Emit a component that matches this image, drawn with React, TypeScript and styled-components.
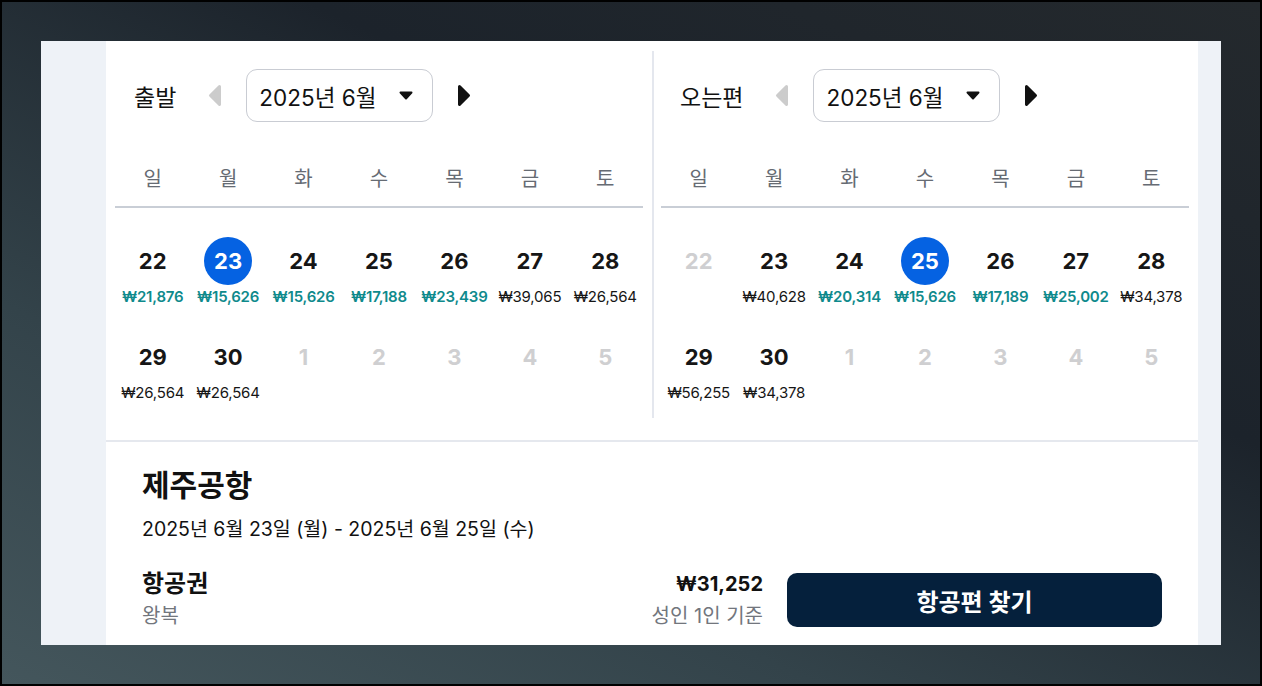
import React from "react";
import styled, { createGlobalStyle } from "styled-components";

const GlobalStyle = createGlobalStyle`
  html, body { margin: 0; padding: 0; }
  body {
    font-family: "Inter", "Noto Sans CJK KR", "Noto Sans", sans-serif;
    color: #111;
  }
  * { box-sizing: border-box; }
`;

const Page = styled.div`
  width: 1262px;
  height: 686px;
  border: 2px solid #000;
  padding: 39px;
  background: linear-gradient(205deg, #24292d 0%, #1c232b 35%, #33434a 70%, #44565c 100%);
  overflow: hidden;
`;

const Panel = styled.div`
  height: 604px;
  background: #eef2f7;
  padding: 0 23px 0 65px;
  overflow: hidden;
`;

const Card = styled.div`
  background: #fff;
  min-height: 100%;
`;

const CalendarSection = styled.div`
  display: flex;
  padding: 10px 9px 22px;
  border-bottom: 2px solid #e5e8ee;
`;

const Divider = styled.div`
  width: 2px;
  background: #e4e7ee;
  margin: 0 7px 0 9px;
`;

const Month = styled.div`
  width: 528px;
  padding: 18px 0 15px;
`;

const Header = styled.div`
  display: flex;
  align-items: center;
  height: 53px;
  padding-left: 19px;
`;

const Label = styled.span`
  font-size: 23px;
  color: #111;
  margin-right: 32px;
`;

const ArrowBtn = styled.span`
  display: inline-flex;
  width: 14px;
  height: 23px;
`;

const Dropdown = styled.div`
  width: 187px;
  height: 53px;
  border: 1px solid #c9ccd3;
  border-radius: 11px;
  display: flex;
  align-items: center;
  justify-content: space-between;
  padding: 0 19px 0 12px;
  margin: 0 24px;
  font-size: 22.5px;
  color: #111;
`;

const WeekRow = styled.div`
  display: grid;
  grid-template-columns: repeat(7, 1fr);
  margin-top: 30px;
  height: 56px;
  border-bottom: 2px solid #c9ced6;
`;

const WeekDay = styled.div`
  text-align: center;
  font-size: 20px;
  line-height: 54px;
  color: #666b73;
`;

const DayGrid = styled.div`
  display: grid;
  grid-template-columns: repeat(7, 1fr);
  row-gap: 26px;
  padding-top: 29px;
`;

const DayCell = styled.div`
  display: flex;
  flex-direction: column;
  align-items: center;
  height: 70px;
`;

const DayNum = styled.div<{ $selected?: boolean; $disabled?: boolean }>`
  width: 48px;
  height: 48px;
  border-radius: 50%;
  display: flex;
  align-items: center;
  justify-content: center;
  font-size: 22px;
  font-weight: 700;
  background: ${(p) => (p.$selected ? "#0562e2" : "transparent")};
  color: ${(p) => (p.$selected ? "#fff" : p.$disabled ? "#cfcfd1" : "#161616")};
`;

const Price = styled.div<{ $cheap?: boolean }>`
  margin-top: 2px;
  font-size: 15px;
  line-height: 20px;
  white-space: nowrap;
  font-weight: ${(p) => (p.$cheap ? 600 : 400)};
  color: ${(p) => (p.$cheap ? "#0f8a8c" : "#161616")};
  letter-spacing: -0.2px;
`;

const Summary = styled.div`
  padding: 23px 36px 0;
`;

const Title = styled.div`
  font-size: 30px;
  font-weight: 700;
  line-height: 40px;
  color: #111;
`;

const DateRange = styled.div`
  margin-top: 10px;
  font-size: 19.5px;
  line-height: 28px;
  color: #111;
`;

const BookRow = styled.div`
  margin-top: 30px;
  display: flex;
  align-items: center;
  height: 54px;
`;

const Info = styled.div<{ $right?: boolean }>`
  flex: ${(p) => (p.$right ? "none" : 1)};
  display: flex;
  flex-direction: column;
  align-items: ${(p) => (p.$right ? "flex-end" : "flex-start")};
`;

const Strong = styled.div<{ $size: number }>`
  font-size: ${(p) => p.$size}px;
  font-weight: 700;
  line-height: 32px;
  color: #111;
`;

const Sub = styled.div`
  font-size: 20px;
  line-height: 32px;
  color: #72767d;
`;

const SearchButton = styled.button`
  margin-left: 24px;
  width: 375px;
  height: 54px;
  border: none;
  border-radius: 10px;
  background: #05203c;
  color: #fff;
  font-family: inherit;
  font-size: 24px;
  font-weight: 700;
  cursor: pointer;
`;

const TriangleLeft = ({ color }: { color: string }) => (
  <svg width="14" height="23" viewBox="0 0 14 23">
    <path d="M11.5 2.5 L2.5 11.5 L11.5 20.5 Z" fill={color} stroke={color} strokeWidth="3" strokeLinejoin="round" />
  </svg>
);

const TriangleRight = ({ color }: { color: string }) => (
  <svg width="14" height="23" viewBox="0 0 14 23">
    <path d="M2.5 2.5 L11.5 11.5 L2.5 20.5 Z" fill={color} stroke={color} strokeWidth="3" strokeLinejoin="round" />
  </svg>
);

const Caret = () => (
  <svg width="14" height="9" viewBox="0 0 14 9">
    <path d="M1.5 1.5 L12.5 1.5 L7 7.5 Z" fill="#111" stroke="#111" strokeWidth="2" strokeLinejoin="round" />
  </svg>
);

type Day = { n: number; price?: string; cheap?: boolean; selected?: boolean; disabled?: boolean };

const departDays: Day[] = [
  { n: 22, price: "₩21,876", cheap: true },
  { n: 23, price: "₩15,626", cheap: true, selected: true },
  { n: 24, price: "₩15,626", cheap: true },
  { n: 25, price: "₩17,188", cheap: true },
  { n: 26, price: "₩23,439", cheap: true },
  { n: 27, price: "₩39,065" },
  { n: 28, price: "₩26,564" },
  { n: 29, price: "₩26,564" },
  { n: 30, price: "₩26,564" },
  { n: 1, disabled: true },
  { n: 2, disabled: true },
  { n: 3, disabled: true },
  { n: 4, disabled: true },
  { n: 5, disabled: true },
];

const returnDays: Day[] = [
  { n: 22, disabled: true },
  { n: 23, price: "₩40,628" },
  { n: 24, price: "₩20,314", cheap: true },
  { n: 25, price: "₩15,626", cheap: true, selected: true },
  { n: 26, price: "₩17,189", cheap: true },
  { n: 27, price: "₩25,002", cheap: true },
  { n: 28, price: "₩34,378" },
  { n: 29, price: "₩56,255" },
  { n: 30, price: "₩34,378" },
  { n: 1, disabled: true },
  { n: 2, disabled: true },
  { n: 3, disabled: true },
  { n: 4, disabled: true },
  { n: 5, disabled: true },
];

const weekDays = ["일", "월", "화", "수", "목", "금", "토"];

const MonthCalendar = ({ label, days }: { label: string; days: Day[] }) => (
  <Month>
    <Header>
      <Label>{label}</Label>
      <ArrowBtn>
        <TriangleLeft color="#cccccc" />
      </ArrowBtn>
      <Dropdown>
        <span>2025년 6월</span>
        <Caret />
      </Dropdown>
      <ArrowBtn>
        <TriangleRight color="#111111" />
      </ArrowBtn>
    </Header>
    <WeekRow>
      {weekDays.map((d) => (
        <WeekDay key={d}>{d}</WeekDay>
      ))}
    </WeekRow>
    <DayGrid>
      {days.map((d, i) => (
        <DayCell key={i}>
          <DayNum $selected={d.selected} $disabled={d.disabled}>
            {d.n}
          </DayNum>
          {d.price && <Price $cheap={d.cheap}>{d.price}</Price>}
        </DayCell>
      ))}
    </DayGrid>
  </Month>
);

export default function App() {
  return (
    <>
      <GlobalStyle />
      <Page>
        <Panel>
          <Card>
            <CalendarSection>
              <MonthCalendar label="출발" days={departDays} />
              <Divider />
              <MonthCalendar label="오는편" days={returnDays} />
            </CalendarSection>
            <Summary>
              <Title>제주공항</Title>
              <DateRange>2025년 6월 23일 (월) - 2025년 6월 25일 (수)</DateRange>
              <BookRow>
                <Info>
                  <Strong $size={24}>항공권</Strong>
                  <Sub>왕복</Sub>
                </Info>
                <Info $right>
                  <Strong $size={20}>₩31,252</Strong>
                  <Sub>성인 1인 기준</Sub>
                </Info>
                <SearchButton>항공편 찾기</SearchButton>
              </BookRow>
            </Summary>
          </Card>
        </Panel>
      </Page>
    </>
  );
}
